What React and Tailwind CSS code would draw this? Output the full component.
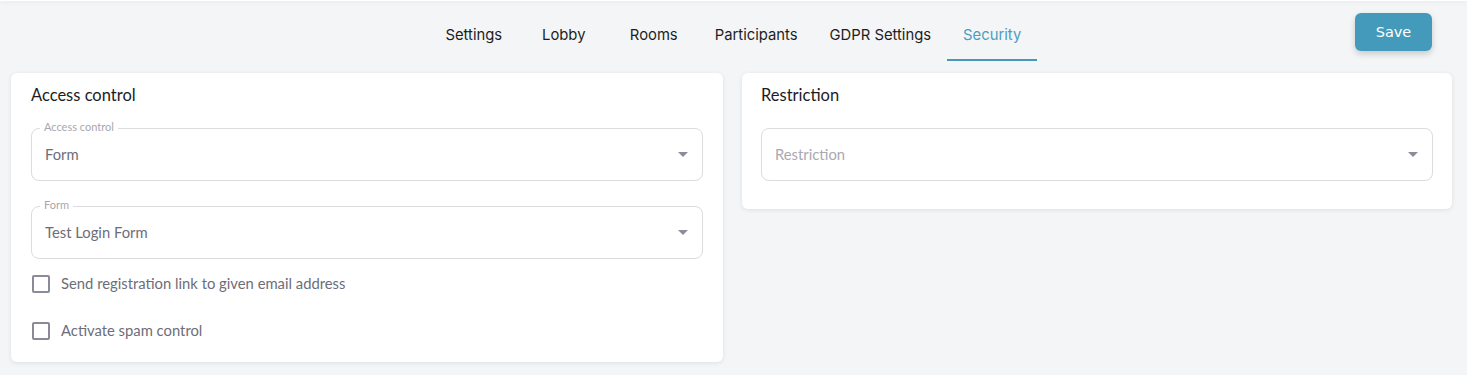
import React from 'react';

const tabs = ['Settings', 'Lobby', 'Rooms', 'Participants', 'GDPR Settings', 'Security'];

function Caret() {
  return (
    <svg width="10" height="5" viewBox="0 0 10 5" className="shrink-0">
      <path d="M0 0 L10 0 L5 5 Z" fill="#8c8c9a" />
    </svg>
  );
}

// Outlined select with a notched label, MUI-style
function SelectField({ label, value, placeholder }) {
  return (
    <div className="relative">
      <div className="flex h-[53px] items-center justify-between rounded-[8px] border border-[#dcdcdf] pl-[13px] pr-[14px]">
        <span className={value ? 'text-[14.8px] text-[#6d6d78]' : 'text-[14.8px] text-[#a9a9b2]'}>
          {value || placeholder}
        </span>
        <Caret />
      </div>
      {label && (
        <span className="absolute -top-[8px] left-[9px] bg-white px-[4px] text-[11px] leading-[14px] text-[#a7a7ae]">
          {label}
        </span>
      )}
    </div>
  );
}

function CheckRow({ text }) {
  return (
    <label className="flex h-[47px] items-center gap-[11px] pl-[1px]">
      <span className="h-[18px] w-[18px] rounded-[2px] border-2 border-[#8a8a98]" />
      <span className="text-[14.8px] text-[#6d6d78]">{text}</span>
    </label>
  );
}

export default function App() {
  return (
    <div className="min-h-[375px] bg-[#f4f5f7]" style={{ fontFamily: 'Lato, "Open Sans", sans-serif' }}>
      <div className="h-[1px] bg-white shadow-[0_1px_4px_rgba(0,0,0,0.12)]" />

      {/* Tab bar + save */}
      <div className="relative flex h-[72px] items-start justify-center pt-[11px]">
        <div className="ml-[-1px] flex" style={{ fontFamily: 'Inter, Roboto, sans-serif' }}>
          {tabs.map((t) => {
            const active = t === 'Security';
            return (
              <div
                key={t}
                className={
                  active
                    ? 'flex h-[49px] min-w-[90px] items-center justify-center border-b-2 border-[#4699bb] px-[16px] text-[14.8px] text-[#4d9cc0]'
                    : 'flex h-[49px] min-w-[90px] items-center justify-center border-b-2 border-transparent px-[16px] text-[14.8px] text-[#1d1d24]'
                }
              >
                {t}
              </div>
            );
          })}
        </div>
        <button
          className="absolute right-[35px] top-[12px] h-[38px] w-[77px] rounded-[6px] bg-[#439abb] pt-[2px] text-[14.5px] text-white shadow-[0_3px_6px_rgba(0,0,0,0.18)]"
          style={{ fontFamily: '"DejaVu Sans", Verdana, sans-serif' }}
        >
          Save
        </button>
      </div>

      {/* Cards */}
      <div className="flex items-start gap-[19px] pl-[11px] pr-[15px]">
        <section className="flex-1 rounded-[6px] bg-white px-[20px] pb-[8px] pt-[11px] shadow-[0_1px_5px_rgba(0,0,0,0.09)]">
          <h2 className="text-[16.5px] leading-[22px] text-[#1c1c22]">Access control</h2>
          <div className="mt-[22px] flex flex-col gap-[25px]">
            <SelectField label="Access control" value="Form" />
            <SelectField label="Form" value="Test Login Form" />
          </div>
          <div className="mt-[1px]">
            <CheckRow text="Send registration link to given email address" />
            <CheckRow text="Activate spam control" />
          </div>
        </section>

        <section className="flex-1 rounded-[6px] bg-white px-[19px] pb-[28px] pt-[11px] shadow-[0_1px_5px_rgba(0,0,0,0.09)]">
          <h2 className="text-[16.5px] leading-[22px] text-[#1c1c22]">Restriction</h2>
          <div className="mt-[22px]">
            <SelectField placeholder="Restriction" />
          </div>
        </section>
      </div>
    </div>
  );
}
